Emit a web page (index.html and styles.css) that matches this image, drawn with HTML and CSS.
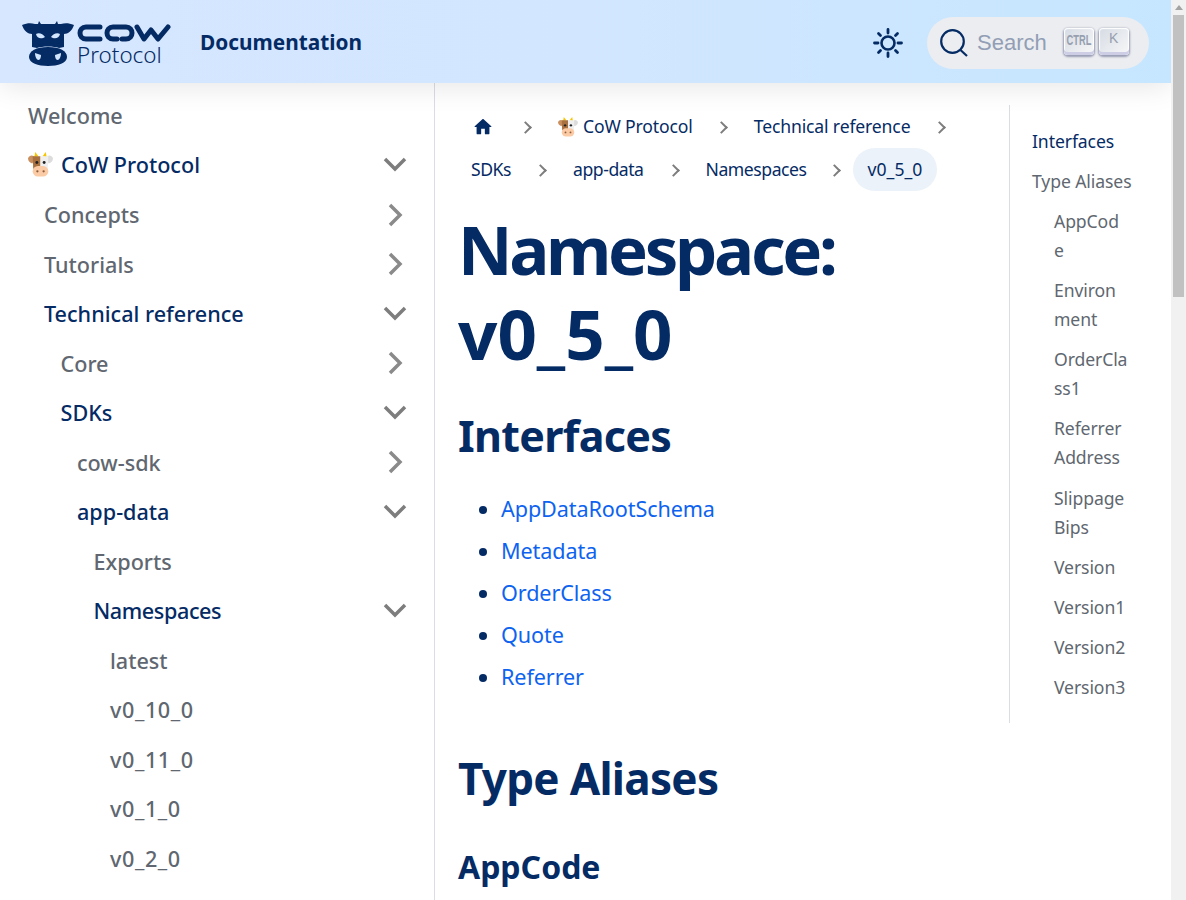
FILE: index.html
```html
<!DOCTYPE html>
<html lang="en">
<head>
<meta charset="utf-8">
<title>v0_5_0 | CoW Protocol Documentation</title>
<link rel="stylesheet" href="styles.css">
</head>
<body>
<div class="page">
<header class="navbar">
  <div class="brand">
    <svg class="logo-head" viewBox="0 0 52 48" width="52" height="48">
      <path fill="#052b65" d="M0 6 C5 4 9 4 13 5 L16 5 L17 2 L19 5 L33 5 L35 2 L36 5 L39 5 C43 4 47 4 52 6 C50 12 46 15 42 15 L42 28 L37 29 C32 27 20 27 15 29 L10 28 L10 15 C6 15 2 12 0 6 Z"/>
      <path fill="#052b65" d="M26 28 C38 28 45 32 45 38 C45 44 36 47 26 47 C16 47 7 44 7 38 C7 32 14 28 26 28 Z"/>
      <path fill="#d2e6ff" d="M14 15 C17 13 21 15 23 18 C20 20 15 20 14 15 Z M38 15 C35 13 31 15 29 18 C32 20 37 20 38 15 Z M13 34 L19 36 C19 39 18 41 16 41 C14 40 13 37 13 34 Z M39 34 L33 36 C33 39 34 41 36 41 C38 40 39 37 39 34 Z"/>
    </svg>
    <div class="wordmark">
      <svg class="logo-cow" viewBox="0 0 94 18" width="94" height="18">
        <g fill="none" stroke="#052b65" stroke-width="5" stroke-linecap="round" stroke-linejoin="round">
          <path d="M23 3 H9 C1 3 1 15 9 15 H23"/>
          <path d="M48 3 H36 C28 3 28 15 36 15 H40 M41 3 H49 C57 3 57 15 49 15 H45"/>
          <path d="M60 3 L67 15 L74 6 L81 15 L91 3"/>
        </g>
      </svg>
      <span class="logo-protocol">Protocol</span>
    </div>
    <b class="brand-title">Documentation</b>
  </div>
  <div class="nav-right">
    <svg class="sun" viewBox="0 0 32 32" width="32" height="32">
      <circle cx="16" cy="16" r="6.5" fill="none" stroke="#052b65" stroke-width="2.6"/>
      <g stroke="#052b65" stroke-width="2.8" stroke-linecap="round">
        <path d="M16 2.500V6M16 26V29.500M2.500 16H6M26 16H29.500M6.500 6.500L8.500 8.500M23.500 23.500L25.500 25.500M6.500 25.500L8.500 23.500M23.500 8.500L25.500 6.500"/>
      </g>
    </svg>
    <div class="search">
      <svg class="search-icon" viewBox="0 0 28 28" width="28" height="28">
        <circle cx="12.500" cy="12.500" r="11.300" fill="none" stroke="#052b65" stroke-width="2.200"/>
        <path d="M20.500 21 L27 27" stroke="#052b65" stroke-width="2.200" fill="none"/>
      </svg>
      <span class="search-label">Search</span>
      <span class="keys"><kbd class="key key-ctrl"><span class="ctrl-text">CTRL</span></kbd><kbd class="key">K</kbd></span>
    </div>
  </div>
</header>
<div class="layout">
  <nav class="sidebar">
    <a class="item">Welcome</a>
    <a class="item active has-caret">
      <span class="label label-cow"><svg class="cow-emoji" viewBox="0 0 24 24" width="25" height="25"><use href="#cow"/></svg> CoW Protocol</span>
      <svg class="caret" viewBox="0 0 24 24" width="24" height="24"><path d="M2 6 L12 16 L22 6"/></svg>
    </a>
    <a class="item lvl1 has-caret"><span class="label">Concepts</span><svg class="caret right" viewBox="0 0 24 24" width="24" height="24"><path d="M7 2 L17 12 L7 22"/></svg></a>
    <a class="item lvl1 has-caret"><span class="label">Tutorials</span><svg class="caret right" viewBox="0 0 24 24" width="24" height="24"><path d="M7 2 L17 12 L7 22"/></svg></a>
    <a class="item lvl1 active has-caret"><span class="label">Technical reference</span><svg class="caret" viewBox="0 0 24 24" width="24" height="24"><path d="M2 6 L12 16 L22 6"/></svg></a>
    <a class="item lvl2 has-caret"><span class="label">Core</span><svg class="caret right" viewBox="0 0 24 24" width="24" height="24"><path d="M7 2 L17 12 L7 22"/></svg></a>
    <a class="item lvl2 active has-caret"><span class="label">SDKs</span><svg class="caret" viewBox="0 0 24 24" width="24" height="24"><path d="M2 6 L12 16 L22 6"/></svg></a>
    <a class="item lvl3 has-caret"><span class="label">cow-sdk</span><svg class="caret right" viewBox="0 0 24 24" width="24" height="24"><path d="M7 2 L17 12 L7 22"/></svg></a>
    <a class="item lvl3 active has-caret"><span class="label">app-data</span><svg class="caret" viewBox="0 0 24 24" width="24" height="24"><path d="M2 6 L12 16 L22 6"/></svg></a>
    <a class="item lvl4">Exports</a>
    <a class="item lvl4 active has-caret"><span class="label label-tight">Namespaces</span><svg class="caret" viewBox="0 0 24 24" width="24" height="24"><path d="M2 6 L12 16 L22 6"/></svg></a>
    <a class="item lvl5">latest</a>
    <a class="item lvl5 ver">v0_10_0</a>
    <a class="item lvl5 ver">v0_11_0</a>
    <a class="item lvl5 ver">v0_1_0</a>
    <a class="item lvl5 ver">v0_2_0</a>
  </nav>
  <main class="content">
    <article class="doc">
      <ul class="crumbs">
        <li class="crumb crumb-home"><svg class="home" viewBox="0 0 24 24" width="22" height="22"><path fill="#052b65" d="M10 19v-5h4v5c0 .55.45 1 1 1h3c.55 0 1-.45 1-1v-7h1.700c.46 0 .68-.57.33-.87L12.670 3.600c-.38-.34-.96-.34-1.340 0l-8.360 7.530c-.34.3-.13.87.33.87H5v7c0 .55.45 1 1 1h3c.55 0 1-.45 1-1z"/></svg></li>
        <li class="crumb sep"><svg class="cow-emoji small" viewBox="0 0 24 24" width="20" height="20"><use href="#cow"/></svg> CoW Protocol</li>
        <li class="crumb sep sep-tech">Technical reference</li>
        <li class="crumb sep end"></li>
        <li class="crumb tight">SDKs</li>
        <li class="crumb sep tight">app-data</li>
        <li class="crumb sep tight">Namespaces</li>
        <li class="crumb sep current">v0_5_0</li>
      </ul>
      <h1 class="title"><span class="title-word">Namespace:</span><span class="title-version">v0_5_0</span></h1>
      <h2 class="h-interfaces">Interfaces</h2>
      <ul class="links">
        <li><a>AppDataRootSchema</a></li>
        <li><a>Metadata</a></li>
        <li><a>OrderClass</a></li>
        <li><a>Quote</a></li>
        <li><a>Referrer</a></li>
      </ul>
      <h2 class="h-types">Type Aliases</h2>
      <h3 class="h-appcode">AppCode</h3>
    </article>
    <aside class="toc">
      <a class="toc-item toc-active">Interfaces</a>
      <a class="toc-item">Type Aliases</a>
      <a class="toc-item toc-sub">AppCod<br>e</a>
      <a class="toc-item toc-sub">Environ<br>ment</a>
      <a class="toc-item toc-sub">OrderCla<br>ss1</a>
      <a class="toc-item toc-sub">Referrer<br>Address</a>
      <a class="toc-item toc-sub">Slippage<br>Bips</a>
      <a class="toc-item toc-sub">Version</a>
      <a class="toc-item toc-sub">Version1</a>
      <a class="toc-item toc-sub">Version2</a>
      <a class="toc-item toc-sub">Version3</a>
    </aside>
  </main>
</div>
</div>
<div class="scrollbar"><span class="scroll-arrow"></span><span class="scroll-thumb"></span></div>
<svg class="defs" width="0" height="0">
  <defs>
    <g id="cow">
      <path fill="#c98f5f" d="M0 6 C2 2 6 3 7 7 L4 11 C2 10 0 9 0 6 Z"/>
      <path fill="#dcdcdc" d="M24 6 C22 2 18 3 17 7 L20 11 C22 10 24 9 24 6 Z"/>
      <path fill="#f7c600" d="M6 5 L7 0 L10 4 Z M14 4 L17 0 L18 5 Z"/>
      <path fill="#a9713f" d="M4.500 4 H12 V16 H5 Z"/>
      <path fill="#efefef" d="M12 4 H19.500 L19 16 H12 Z"/>
      <rect x="4.500" y="13.500" width="15" height="10" rx="5" fill="#fbcba6"/>
      <circle cx="8.500" cy="10" r="1.400" fill="#222"/><circle cx="15.500" cy="10" r="1.400" fill="#222"/>
      <circle cx="9" cy="18.500" r="1.100" fill="#8a5a3c"/><circle cx="15" cy="18.500" r="1.100" fill="#8a5a3c"/>
    </g>
  </defs>
</svg>
</body>
</html>
```
FILE: styles.css
```css
* { box-sizing: border-box; }
html, body { margin: 0; height: 100%; overflow: hidden; }
body {
  font-family: "Noto Sans", "Open Sans", "Liberation Sans", sans-serif;
  color: #052b65;
  background: #fff;
  height: 900px;
  display: flex;
}
.page { flex: 1; min-width: 0; height: 900px; overflow: hidden; }
.scrollbar {
  width: 15px;
  flex: none;
  background: #f1f1f1;
  display: flex;
  flex-direction: column;
  align-items: center;
}
.scroll-arrow {
  margin-top: 5px;
  width: 0;
  height: 0;
  border-left: 4px solid transparent;
  border-right: 4px solid transparent;
  border-bottom: 5px solid #a3a3a3;
}
.scroll-thumb { margin-top: 5px; width: 11px; height: 282px; background: #c1c1c1; }
.defs { position: absolute; }
.navbar {
  height: 83px;
  background: linear-gradient(90deg, #d6e7ff 0%, #d2e6ff 50%, #c6e6ff 100%);
  box-shadow: 0 4px 28px rgba(0, 0, 0, 0.1);
  display: flex;
  align-items: center;
  justify-content: space-between;
  padding: 2px 22px 0;
  position: relative;
  z-index: 2;
}
.brand { display: flex; align-items: center; }
.logo-head { display: block; margin-top: 1px; }
.wordmark { display: flex; flex-direction: column; margin: 5px 0 0 3px; width: 123px; }
.logo-cow { display: block; margin-bottom: 2px; }
.logo-protocol { font-size: 22.400px; line-height: 22px; font-weight: 300; }
.brand-title { font-size: 20.800px; font-weight: 700; margin-top: -2px; }
.nav-right { display: flex; align-items: center; gap: 23px; }
.search {
  width: 222px;
  height: 52px;
  border-radius: 26px;
  background: #ebedf0;
  display: flex;
  align-items: center;
  padding: 0 8px 0 13px;
}
.search-label {
  font-family: "Liberation Sans", sans-serif;
  font-size: 22px;
  color: #929eb5;
  margin-left: 9px;
}
.keys { display: flex; gap: 5px; margin-left: 17px; margin-top: -2px; }
.key {
  width: 30px;
  height: 27px;
  border-radius: 4px;
  background: linear-gradient(-225deg, #d5dbe4, #f8f8f8);
  box-shadow: inset 0 -3px 0 0 #cdcde6, inset 0 0 1px 1px #fff, 0 1px 2px 1px rgba(30, 35, 90, 0.4);
  font-family: "Liberation Sans", sans-serif;
  font-size: 14px;
  color: #969faf;
  display: flex;
  align-items: flex-start;
  justify-content: center;
  padding-top: 2px;
}
.key-ctrl { padding-top: 3px; }
.ctrl-text { display: block; font-size: 15px; font-weight: 700; transform: scaleX(0.62); }
.layout { display: flex; height: 817px; }
.sidebar {
  width: 435px;
  flex: none;
  border-right: 1px solid #dadde1;
  padding: 8px 12px 0;
  font-size: 21.600px;
  font-weight: 500;
  color: #606770;
}
.item {
  display: flex;
  align-items: center;
  justify-content: space-between;
  height: 49.500px;
  padding-left: 16px;
  padding-right: 15px;
  color: #606770;
}
.item.active { color: #052b65; }
.lvl1 { padding-left: 32px; }
.lvl2 { padding-left: 48.500px; }
.lvl3 { padding-left: 65px; }
.lvl4 { padding-left: 81.500px; }
.lvl5 { padding-left: 98px; }
.ver { letter-spacing: 0.6px; }
.label { display: flex; align-items: center; gap: 8px; }
.label-cow { margin-top: -2px; }
.label-tight { letter-spacing: -0.4px; }
.caret { fill: none; stroke: #7d7d7d; stroke-width: 3.500; flex: none; }
.caret.right { stroke: #8a8a8a; }
.content { flex: 1; display: flex; padding: 22px 0 0 23px; min-width: 0; }
.doc { width: 530px; flex: none; }
.crumbs {
  list-style: none;
  margin: 0 0 0 -1px;
  padding: 0;
  display: flex;
  flex-wrap: wrap;
  font-size: 17.600px;
  font-weight: 400;
  line-height: 43px;
  letter-spacing: -0.15px;
}
.crumb { display: flex; align-items: center; height: 43px; padding: 0 14px; border-radius: 22px; }
.crumb-home { padding: 0 16px 0 15px; }
.tight { letter-spacing: -0.45px; }
.sep { position: relative; margin-left: 34px; }
.sep-tech { margin-left: 33px; }
.sep::before {
  content: "";
  position: absolute;
  left: -23px;
  top: 18px;
  width: 7px;
  height: 7px;
  border-top: 2px solid #7d7d7d;
  border-right: 2px solid #7d7d7d;
  transform: rotate(45deg);
}
.end { padding: 0; }
.current { background: #ebf2fa; padding: 0 15px; letter-spacing: 0; margin-left: 32px; }
.cow-emoji { flex: none; }
.cow-emoji.small { margin-right: 5px; }
.title {
  line-height: 84px;
  font-weight: 700;
  margin: 16px 0 0;
  width: 440px;
}
.title-word { display: block; font-size: 67px; letter-spacing: -3.300px; }
.title-version { display: block; font-size: 69px; }
.h-interfaces { font-size: 43px; letter-spacing: -0.700px; line-height: 56px; font-weight: 700; margin: 33px 0 0; }
.links { margin: 24px 0 0; padding-left: 43px; font-size: 21.600px; letter-spacing: -0.1px; line-height: 42px; }
.links a { color: #0d63f0; }
.h-types { font-size: 44px; letter-spacing: -0.700px; line-height: 56px; font-weight: 700; margin: 52px 0 0; }
.h-appcode { font-size: 32px; line-height: 40px; font-weight: 700; margin: 41px 0 0; }
.toc {
  width: 162px;
  height: 618px;
  flex: none;
  border-left: 1px solid #dadde1;
  margin-left: 21px;
  padding: 22px 0 0 22px;
  font-size: 17.600px;
  letter-spacing: -0.1px;
  line-height: 29px;
  color: #606770;
}
.toc-item { display: block; margin-bottom: 11.100px; }
.toc-active { color: #052b65; }
.toc-sub { padding-left: 22px; }
```
